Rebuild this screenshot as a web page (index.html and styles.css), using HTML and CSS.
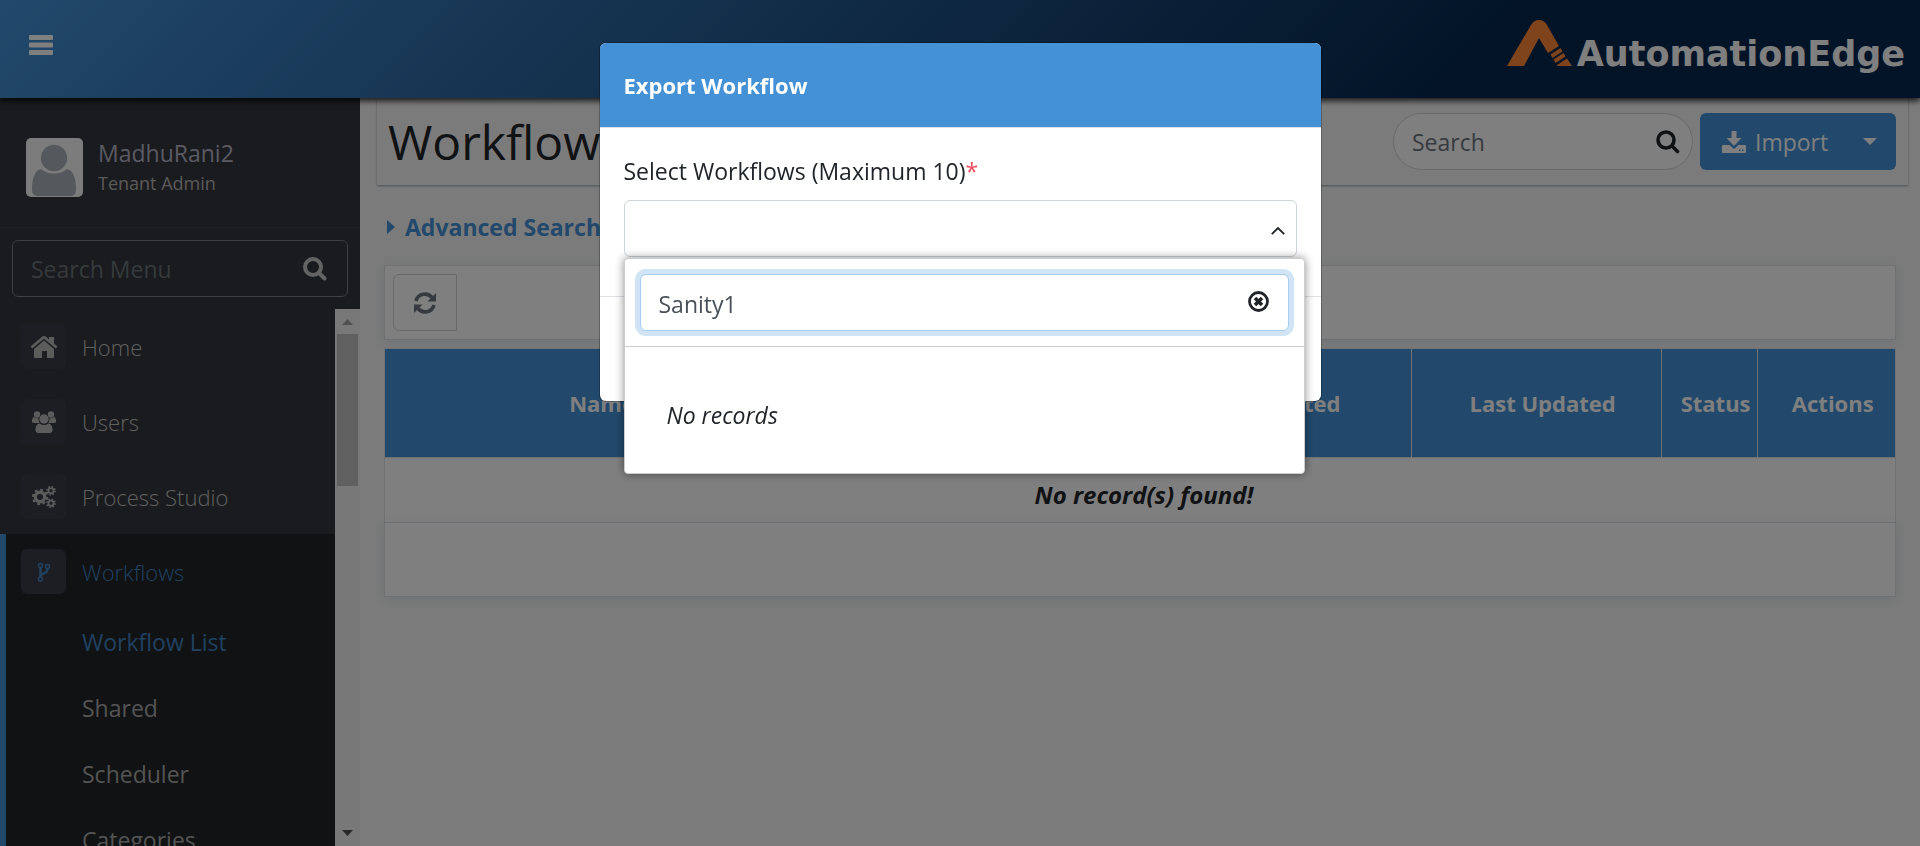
FILE: index.html
```html
<!DOCTYPE html>
<html lang="en">
<head>
<meta charset="utf-8">
<meta name="viewport" content="width=device-width, initial-scale=1">
<title>AutomationEdge - Workflows</title>
<link rel="stylesheet" href="styles.css">
</head>
<body>
<div class="app">
  <header class="topbar">
    <button class="menu-toggle" type="button" aria-label="Toggle menu">
      <svg width="24" height="20" viewBox="0 0 24 20"><g fill="currentColor"><rect width="24" height="5" rx="1"/><rect y="7.500" width="24" height="5" rx="1"/><rect y="15" width="24" height="5" rx="1"/></g></svg>
    </button>
    <div class="brand">
      <svg width="66" height="46" viewBox="0 0 66 46" aria-hidden="true"><path fill="#ff8838" d="M0 46 24 5Q27 0 32 0t8 5L52 26 41 33 32 18 17 46ZM43.500 34.500 53.500 28l2 3.500-10 6.500ZM46.500 39.500 56.500 33l2 3.500-10 6.500ZM50 45l10-6.500L65 46H50Z"/></svg>
      <span class="brand-name">AutomationEdge</span>
    </div>
  </header>

  <div class="layout">
    <aside class="sidebar">
      <div class="profile">
        <svg class="avatar" width="57" height="59" viewBox="0 0 57 59" aria-hidden="true"><rect width="57" height="59" rx="5" fill="#f8f8f8"/><g fill="#aab2bd"><circle cx="28" cy="20" r="13.200"/><path d="M15 31c7 6 19 6 26 0 6 1 9 9 9 20 0 5-2 7-6 7H12c-4 0-6-2-6-7 0-11 3-19 9-20Z"/></g></svg>
        <div class="profile-text">
          <span class="profile-name">MadhuRani2</span>
          <span class="profile-role">Tenant Admin</span>
        </div>
      </div>
      <div class="menu-search">
        <div class="menu-search-box">
          <input type="text" placeholder="Search Menu" aria-label="Search Menu">
          <svg width="24" height="24" viewBox="0 0 24 24" fill="none" stroke="currentColor" stroke-width="4"><circle cx="10" cy="10" r="8"/><path stroke-linecap="round" d="m16 16 5.500 5.500"/></svg>
        </div>
      </div>
      <div class="menu-area">
        <nav class="menu">
          <a class="menu-item" href="#"><span class="menu-icon"><svg width="28" height="22" viewBox="0 0 28 22" fill="currentColor"><path d="M14 4.500 24 13v8q0 1-1 1h-6v-7h-5v7H5q-1 0-1-1v-8Z"/><path d="M14 0q1 0 2 .8L19 3.500V1h5v6.500l3.500 3-1.600 2L14 2.800 2.100 12.500.5 10.500 12 .8Q13 0 14 0Z"/></svg></span>Home</a>
          <a class="menu-item" href="#"><span class="menu-icon"><svg width="24" height="22" viewBox="0 0 24 22" fill="currentColor"><circle cx="5" cy="3.500" r="3.200"/><circle cx="19" cy="3.500" r="3.200"/><circle cx="12" cy="8" r="4.700"/><path d="M2 6c1.500 1.500 3 1.600 4.500 1-.2 2 .3 3.500 1.200 5H2C0 12 0 11 0 10c0-2 .8-4 2-4ZM22 6c-1.500 1.500-3 1.600-4.500 1 .2 2-.3 3.500-1.200 5H22c2 0 2-1 2-2 0-2-.8-4-2-4ZM7.500 12.500c3 2 6 2 9 0 3 .5 4 3.500 4 6.500 0 2-1 3-3 3h-11c-2 0-3-1-3-3 0-3 1-6 4-6.500Z"/></svg></span>Users</a>
          <a class="menu-item" href="#"><span class="menu-icon"><svg width="24" height="22" viewBox="0 0 24 22" fill="none" stroke="currentColor"><circle cx="8" cy="11" r="4.700" stroke-width="3.400"/><circle cx="8" cy="11" r="7.200" stroke-width="2" stroke-dasharray="2.900 2.750"/><circle cx="19" cy="4.800" r="2.600" stroke-width="1.800"/><circle cx="19" cy="4.800" r="4.100" stroke-width="1.500" stroke-dasharray="1.600 1.620"/><circle cx="19" cy="17.200" r="2.600" stroke-width="1.800"/><circle cx="19" cy="17.200" r="4.100" stroke-width="1.500" stroke-dasharray="1.600 1.620"/></svg></span>Process Studio</a>
          <div class="menu-group">
            <a class="menu-item is-active" href="#"><span class="menu-icon"><svg width="14" height="20" viewBox="0 0 14 20" fill="none" stroke="currentColor" stroke-width="1.500"><circle cx="3.500" cy="3.500" r="2"/><circle cx="3.500" cy="17" r="2"/><circle cx="10.500" cy="4.500" r="2"/><path stroke-width="2.500" d="M3.500 5.500v9.500M10.500 6.500c0 4-2 4-4 5s-3 1.500-3 3"/></svg></span>Workflows</a>
            <a class="submenu-item is-active" href="#">Workflow List</a>
            <a class="submenu-item" href="#">Shared</a>
            <a class="submenu-item" href="#">Scheduler</a>
            <a class="submenu-item" href="#">Categories</a>
          </div>
        </nav>
        <div class="scrollbar" aria-hidden="true">
          <svg class="scroll-up" width="11" height="6" viewBox="0 0 11 6"><path fill="currentColor" d="M0 6 5.500 0 11 6Z"/></svg>
          <div class="scroll-thumb"></div>
          <svg class="scroll-down" width="11" height="6" viewBox="0 0 11 6"><path fill="currentColor" d="M0 0 5.500 6 11 0Z"/></svg>
        </div>
      </div>
    </aside>

    <main class="content">
      <div class="page-head">
        <h1>Workflows</h1>
        <div class="page-actions">
          <div class="search-pill">
            <input type="text" placeholder="Search" aria-label="Search">
            <svg width="24" height="24" viewBox="0 0 24 24" fill="none" stroke="currentColor" stroke-width="3.600"><circle cx="10" cy="10" r="8"/><path stroke-linecap="round" d="m16 16 5.500 5.500"/></svg>
          </div>
          <div class="import-group">
            <button type="button" class="import-main"><svg width="24" height="22" viewBox="0 0 24 22"><path fill="currentColor" fill-rule="evenodd" d="M9.500 0h5v7h5L12 15 4.500 7h5ZM1 14h6.500l4.500 4 4.500-4H23q1 0 1 1v6q0 1-1 1H1q-1 0-1-1v-6q0-1 1-1ZM17 18.500v1.500h1.500v-1.500ZM20 18.500v1.500h1.500v-1.500Z"/></svg>Import</button>
            <button type="button" class="import-more" aria-label="More import options"><svg width="14" height="7" viewBox="0 0 14 7"><path fill="currentColor" d="M0 0h14L7 7Z"/></svg></button>
          </div>
        </div>
      </div>

      <button type="button" class="advanced"><svg width="8" height="14" viewBox="0 0 8 14"><path fill="currentColor" d="M0 0 8 7 0 14Z"/></svg>Advanced Search</button>

      <div class="toolbar">
        <button type="button" class="refresh" aria-label="Refresh"><svg width="22" height="22" viewBox="0 0 22 22"><g fill="none" stroke="currentColor" stroke-width="3.600"><path d="M2 9A9.200 9.200 0 0 1 18 5.500M20 13A9.200 9.200 0 0 1 4 16.500"/></g><path fill="currentColor" d="M22 1v8.500h-8.500ZM0 21v-8.500h8.500Z"/></svg></button>
      </div>

      <table class="grid">
        <colgroup><col class="col-name"><col class="col-extra"><col class="col-created"><col class="col-updated"><col class="col-status"><col class="col-actions"></colgroup>
        <thead><tr><th>Name</th><th></th><th>Created</th><th>Last Updated</th><th>Status</th><th>Actions</th></tr></thead>
        <tbody><tr><td colspan="6">No record(s) found!</td></tr></tbody>
      </table>
      <div class="pager"></div>
    </main>
  </div>
</div>

<div class="backdrop">
  <div class="modal" role="dialog" aria-modal="true" aria-labelledby="modal-title">
    <div class="modal-head"><h2 id="modal-title">Export Workflow</h2></div>
    <div class="modal-body">
      <label for="workflows">Select Workflows (Maximum 10)<span class="required">*</span></label>
      <div class="picker">
        <select id="workflows"><option></option></select>
        <svg class="chevron" width="14" height="8" viewBox="0 0 14 8" fill="none" stroke="currentColor" stroke-width="1.800"><path d="M.8 7.200 7 1l6.200 6.200"/></svg>
        <div class="dropdown">
          <div class="dropdown-search">
            <input type="text" value="Sanity1" aria-label="Filter workflows">
            <button type="button" aria-label="Clear"><svg width="21" height="21" viewBox="0 0 21 21" fill="none" stroke="currentColor"><circle cx="10.500" cy="10.500" r="9" stroke-width="2.800"/><path stroke-width="3.600" d="m7 7 7 7M14 7l-7 7"/></svg></button>
          </div>
          <p class="dropdown-empty">No records</p>
        </div>
      </div>
    </div>
    <div class="modal-foot"></div>
  </div>
</div>
</body>
</html>
```
FILE: styles.css
```css
* { box-sizing: border-box; }

body {
  margin: 0;
  font-family: "Open Sans", "Noto Sans", sans-serif;
  font-size: 23px;
  line-height: 36px;
  color: #212529;
  background: #f7f7f7;
}

button, input, select { font: inherit; color: inherit; }
button { border: 0; background: none; padding: 0; }
a { text-decoration: none; color: inherit; }
svg { flex: none; display: block; }

.app { height: 100vh; display: flex; flex-direction: column; overflow: hidden; }

.topbar {
  position: relative;
  z-index: 1;
  flex: none;
  height: 98px;
  padding: 0 15px 8px 29px;
  display: flex;
  align-items: center;
  justify-content: space-between;
  background: linear-gradient(135deg, #4493d8 0%, #3b82c4 10%, #06284f 76%, #062850 100%);
  box-shadow: 0 3px 6px rgba(0, 0, 0, .8);
}
.menu-toggle { color: #fff; }
.brand { display: flex; align-items: flex-end; gap: 4px; padding-bottom: 4px; }
.brand-name { color: #fff; font: bold 35px/35px "DejaVu Sans", sans-serif; height: 29px; }

.layout { flex: 1; min-height: 0; display: flex; }

.sidebar { flex: none; width: 360px; display: flex; flex-direction: column; background: #34363c; }
.profile { display: flex; gap: 15px; align-items: center; height: 130px; padding: 10px 26px 0; border-bottom: 1px solid #42444b; }
.profile-text { display: flex; flex-direction: column; }
.profile-name { color: #b4b4c6; line-height: 30px; }
.profile-role { color: #b4b4b4; font-size: 18px; line-height: 30px; }
.menu-search { padding: 12px; }
.menu-search-box { display: flex; align-items: center; height: 57px; padding: 0 20px 0 18px; border: 1px solid #7a7e86; border-radius: 6px; }
.menu-search input { flex: 1; min-width: 0; border: 0; padding: 0; background: none; outline: 0; }
.menu-search input::placeholder { color: #6b7478; opacity: 1; }
.menu-search svg { color: #c6c6c6; }

.menu-area { flex: 1; min-height: 0; display: flex; }
.menu { flex: 1; overflow: hidden; }
.menu-item { display: flex; align-items: center; gap: 16px; height: 75px; padding-left: 21px; color: #c0c0c0; font-size: 22px; font-weight: 300; }
.menu-icon { display: flex; align-items: center; justify-content: center; width: 45px; height: 45px; border-radius: 6px; background: #3a3c46; color: #b8b8b8; }
.menu-group { background: #202426; border-left: 6px solid #4491d6; }
.menu-group .menu-item { padding-left: 15px; }
.submenu-item { display: flex; align-items: center; height: 66px; padding-left: 76px; color: #a8a8a8; }
.menu-group .is-active, .is-active .menu-icon { color: #4083c0; }
.scrollbar { flex: none; width: 25px; background: #f0f0f0; display: flex; flex-direction: column; align-items: center; padding: 10px 0; color: #a0a0a0; }
.scroll-thumb { width: 21px; height: 152px; margin-top: 9px; background: #c1c1c1; }
.scroll-down { margin-top: auto; color: #505050; }

.content { flex: 1; min-width: 0; padding: 0 24px; }
.page-head {
  display: flex;
  align-items: center;
  justify-content: space-between;
  height: 87px;
  margin: 0 -12px 1px -7px;
  padding: 0 12px 0 11px;
  box-shadow: 0 1px 2px rgba(40, 60, 70, .45);
}
h1 { margin: 0; font-size: 48px; line-height: 60px; font-weight: 500; }
.page-actions { display: flex; gap: 7px; }
.search-pill { display: flex; align-items: center; width: 300px; height: 57px; padding: 0 12px 0 18px; border: 1px solid #ced4da; border-radius: 29px; background: #fff; }
.search-pill input { flex: 1; min-width: 0; border: 0; padding: 0; background: none; outline: 0; }
.search-pill input::placeholder { color: #6c757d; opacity: 1; }
.import-group { display: flex; width: 196px; border-radius: 6px; background: #4491d6; color: #fff; }
.import-main { flex: 1; display: flex; align-items: center; gap: 9px; padding-left: 22px; }
.import-more { width: 52px; padding-left: 19px; }

.advanced { display: flex; align-items: center; gap: 10px; margin: 24px 0 20px 3px; color: #4491d6; font-weight: 700; }

.toolbar, .pager { border: 1px solid #dee2e6; background: #fff; box-shadow: 0 2px 12px rgba(80, 110, 140, .15); }
.toolbar { padding: 8px; margin-bottom: 8px; }
.refresh { display: flex; align-items: center; justify-content: center; width: 64px; height: 57px; border: 1px solid #ced4da; border-radius: 6px 0 0 6px; color: #6c757d; }

.grid { width: 100%; table-layout: fixed; border-collapse: collapse; background: #fff; }
.grid th { height: 109px; padding: 0 0 0 12px; border: 1px solid #dee2e6; background: #4491d6; color: #fff; font-weight: 700; font-size: 22px; }
.grid td { height: 65px; padding: 10px 0 0 8px; border: 1px solid #dee2e6; text-align: center; font-size: 24px; font-weight: 700; font-style: italic; }
.col-name { width: 28%; }
.col-extra { width: 24%; }
.col-created { width: 16%; }
.col-updated { width: 16.500%; }
.col-status { width: 6.400%; }
.pager { height: 74px; border-top: 0; }

.backdrop { position: fixed; inset: 0; z-index: 10; display: flex; align-items: flex-start; justify-content: center; padding-top: 43px; background: rgba(0, 0, 0, .5); }
.modal { width: 721px; border-radius: 6px; background: #fff; box-shadow: 0 0 0 1px rgba(0, 0, 0, .25); }
.modal-head { display: flex; align-items: center; height: 85px; padding: 0 24px; border-radius: 6px 6px 0 0; border-bottom: 1px solid #dee2e6; background: #4491d6; color: #fff; }
h2 { margin: 0; font-size: 22px; line-height: 36px; font-weight: 700; }
.modal-body { padding: 25px 24px 39px; }
.modal-body label { display: block; margin-bottom: 11px; }
.required { color: #f0485a; }
.picker { position: relative; height: 57px; }
.picker select { appearance: none; width: 100%; height: 57px; border: 1px solid #ced4da; border-radius: 6px; background: #fff; }
.chevron { position: absolute; right: 12px; top: 27px; pointer-events: none; }
.modal-foot { height: 105px; border-top: 1px solid #dee2e6; }

.dropdown { position: absolute; top: 58px; left: 0; width: 681px; border: 1px solid #ccc; border-radius: 4px; background: #fff; box-shadow: 0 0 10px rgba(0, 0, 0, .45); }
.dropdown-search { position: relative; padding: 15px; border-bottom: 1px solid #ccc; }
.dropdown-search input { display: block; width: 100%; height: 57px; padding: 2px 18px 0; border: 1px solid #a6cdf0; border-radius: 6px; outline: 0; color: #495057; box-shadow: 0 0 0 5px #d0e4f6; }
.dropdown-search button { position: absolute; right: 35px; top: 32px; }
.dropdown-empty { margin: 0; padding: 50px 42px 40px; font-style: italic; }
```
